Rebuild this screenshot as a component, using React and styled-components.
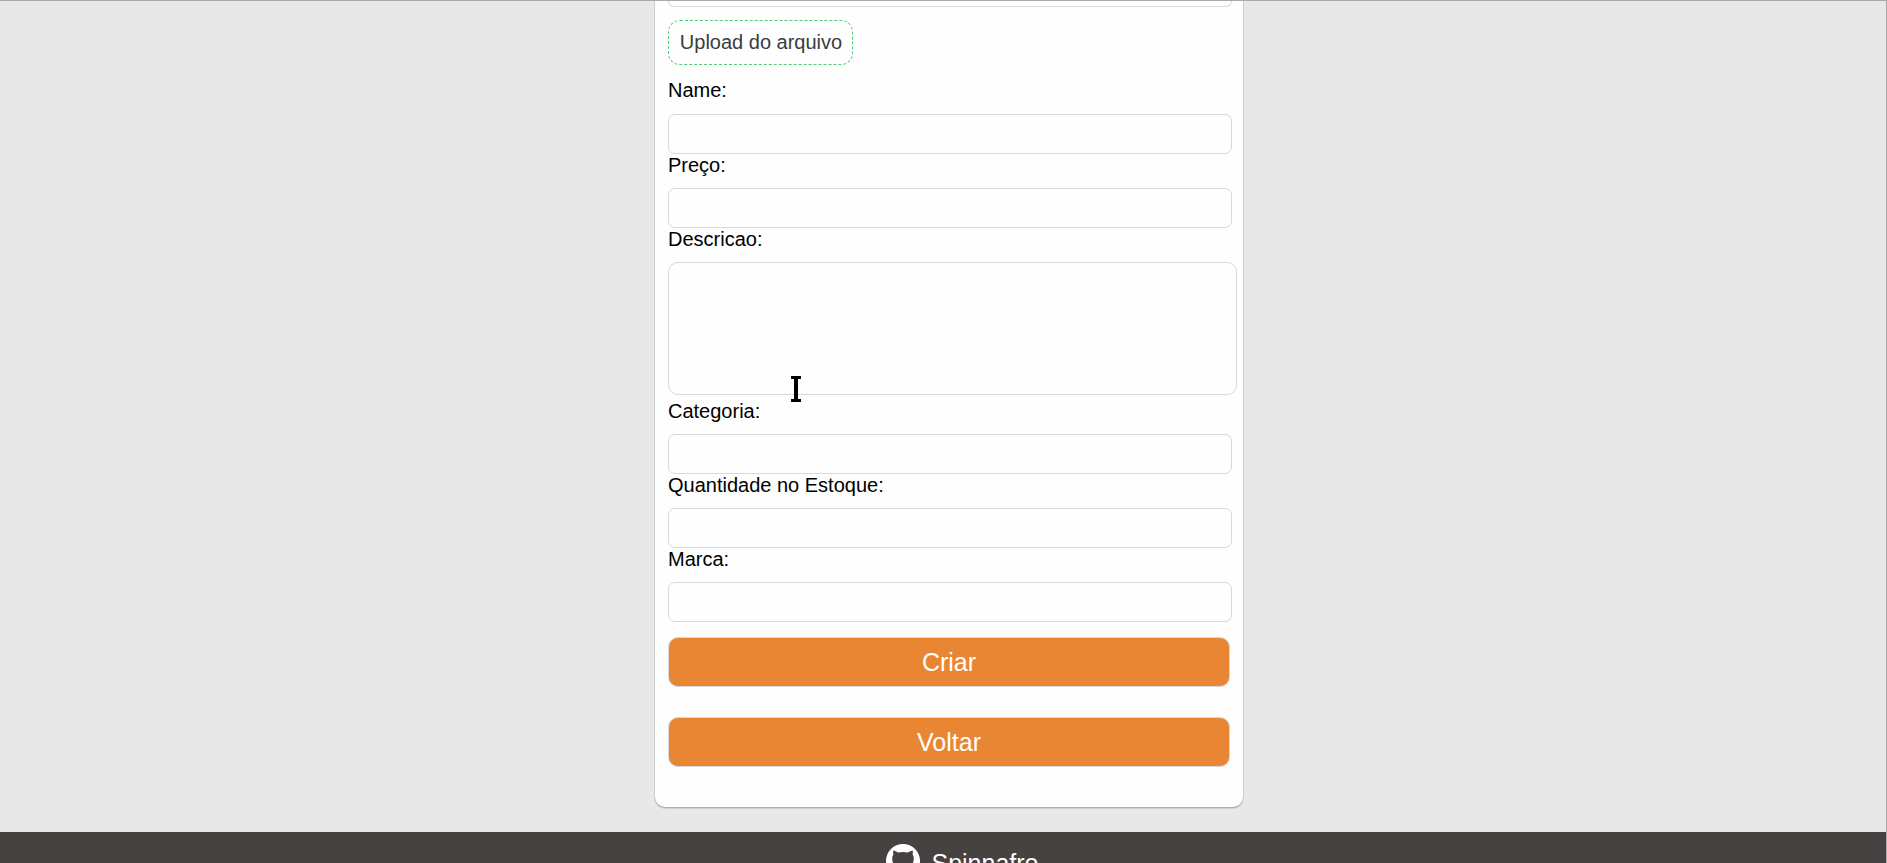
import React from "react";
import styled, { createGlobalStyle } from "styled-components";

const GlobalStyle = createGlobalStyle`
  * { box-sizing: border-box; }
  body {
    margin: 0;
    background: #e8e8e8;
    overflow: hidden;
    font-family: Arial, "Liberation Sans", sans-serif;
  }
`;

const Page = styled.div`
  position: relative;
  display: flex;
  flex-direction: column;
  align-items: center;
  height: 100vh;
  overflow: hidden;
  border-top: 1px solid #aaa9ab;
  border-right: 1px solid #aaa9ab;
`;

const Card = styled.form`
  display: flex;
  flex-direction: column;
  flex: none;
  align-items: flex-start;
  width: 588px;
  height: 806px;
  margin-left: 12px;
  padding: 0 13px;
  background: #fefefe;
  border-radius: 0 0 10px 10px;
  box-shadow: 0 1px 0 0 #acacac, 0 0 0 1px #cccccc, 0 2px 0 0 #cfcfcf;
`;

const ImageField = styled.div`
  flex: none;
  width: 564px;
  height: 6px;
  border: 1px solid #d8d8d8;
  border-top: 0;
  border-radius: 0 0 7px 7px;
`;

const UploadButton = styled.label`
  flex: none;
  width: 185px;
  height: 45px;
  margin: 13px 0 14px;
  padding-left: 1px;
  border: 1px dashed #4fcb7c;
  border-radius: 12px;
  color: #3c3c3c;
  font-size: 20px;
  line-height: 43px;
  text-align: center;
`;

const Field = styled.div`
  display: flex;
  flex-direction: column;
  flex: none;
  margin-bottom: ${({ $gap }) => $gap || 0}px;
`;

const Label = styled.label`
  height: 24px;
  margin-bottom: 10px;
  color: #000;
  font-size: 20px;
  line-height: 22px;

  ${Field}:nth-of-type(2) > & {
    margin-bottom: 11px;
  }
`;

const Input = styled.input`
  width: 564px;
  height: 40px;
  border: 1px solid #d8d8d8;
  border-radius: 7px;
  background: #fefefe;
  outline: none;
`;

const TextArea = styled.textarea`
  display: block;
  width: 569px;
  height: 133px;
  border: 1px solid #d8d8d8;
  border-radius: 10px;
  background: #fefefe;
  resize: none;
  outline: none;
`;

const Button = styled.button`
  flex: none;
  width: 562px;
  height: 50px;
  margin-top: ${({ $top }) => $top}px;
  padding: 0;
  border: 1px solid #d8d8d8;
  border-radius: 10px;
  background: #e98634;
  color: #fff;
  font-family: inherit;
  font-size: 25px;
`;

const Footer = styled.footer`
  display: flex;
  flex: none;
  align-items: flex-start;
  justify-content: center;
  gap: 11px;
  width: 100%;
  height: 60px;
  margin-top: 25px;
  padding: 12px 0 0 39px;
  background: #464241;
  color: #fff;
  font-size: 25px;
  line-height: 38px;
`;

const TextCursor = styled.svg`
  position: absolute;
  left: 791px;
  top: 375px;
`;

function GithubIcon() {
  return (
    <svg width="34" height="34" viewBox="0 0 34 34">
      <path
        fill="#fff"
        fillRule="evenodd"
        d="M17 0a17 17 0 1 1 0 34a17 17 0 0 1 0-34zM7.4 6.4Q6.8 8.5 7.4 10.4Q6.2 12 6.2 14.5C6.2 21 10 23 14 23.6Q12.8 24.8 12.8 27V34H21.2V27Q21.2 24.8 20 23.6C24 23 27.8 21 27.8 14.5Q27.8 12 26.6 10.4Q27.2 8.5 26.6 6.4Q24.4 6.6 21.8 8.5Q17 7.6 12.2 8.5Q9.6 6.6 7.4 6.4z"
      />
    </svg>
  );
}

const fields = [
  { label: "Name:" },
  { label: "Preço:" },
  { label: "Descricao:", multiline: true, gap: 5 },
  { label: "Categoria:" },
  { label: "Quantidade no Estoque:" },
  { label: "Marca:" },
];

export default function App() {
  return (
    <>
      <GlobalStyle />
      <Page>
        <Card>
          <ImageField />
          <UploadButton>Upload do arquivo</UploadButton>
          {fields.map(({ label, multiline, gap }) => (
            <Field key={label} $gap={gap}>
              <Label>{label}</Label>
              {multiline ? <TextArea /> : <Input />}
            </Field>
          ))}
          <Button type="button" $top={15}>Criar</Button>
          <Button type="button" $top={30}>Voltar</Button>
        </Card>
        <Footer>
          <GithubIcon />
          <span>Spinnafro</span>
        </Footer>
        <TextCursor width="10" height="26" viewBox="0 0 10 26">
          <path d="M0 0h10v3H7v20h3v3H0v-3h3V3H0z" fill="#000" />
        </TextCursor>
      </Page>
    </>
  );
}
